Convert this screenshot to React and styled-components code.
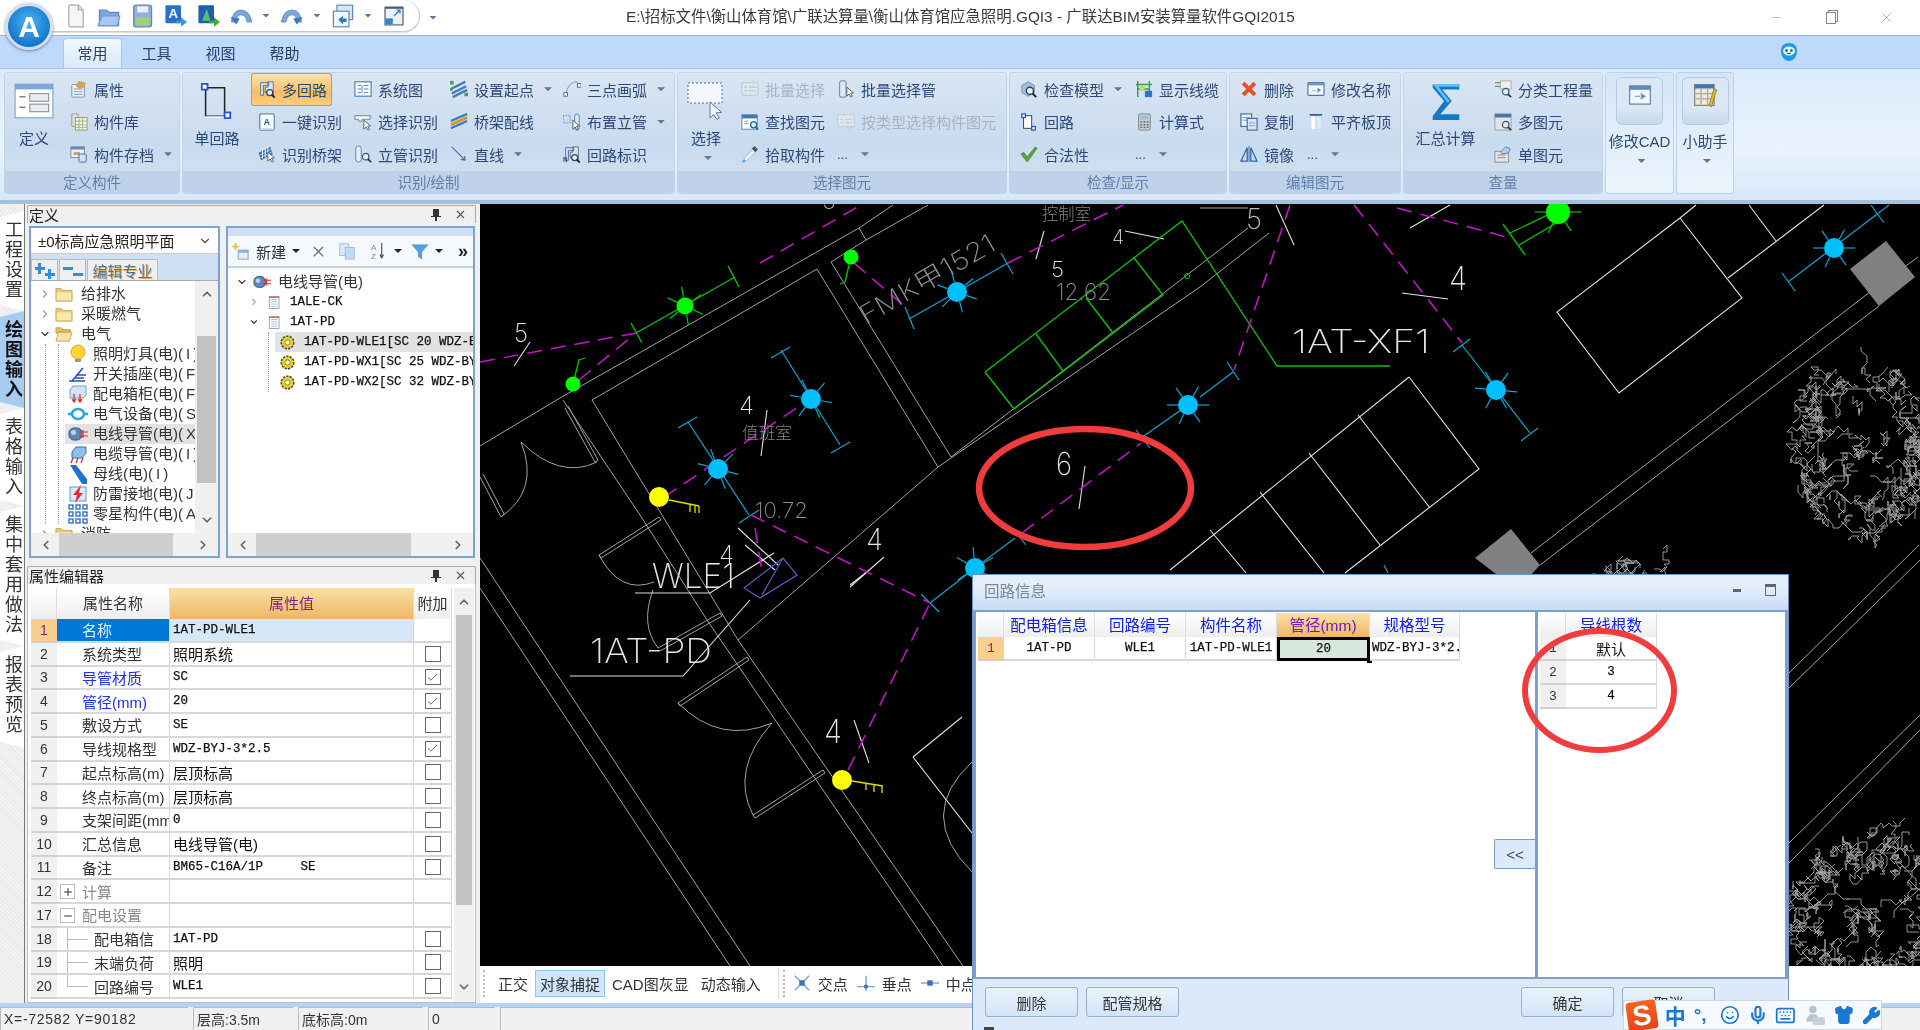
import React from 'react';
import styled, { createGlobalStyle } from 'styled-components';
import { ChevronRight, ChevronDown, ChevronUp, ChevronLeft, X, Minus, Plus, Smile, Mic, Keyboard, Shirt, Wrench, Check } from 'lucide-react';

const SANS = '"Liberation Sans","Noto Sans CJK SC",sans-serif';
const MONO = '"Liberation Mono","Noto Sans CJK SC",monospace';
const CAD = '"Inter","Liberation Sans","Noto Sans CJK SC",sans-serif';

const GlobalStyle = createGlobalStyle`
  html, body { margin: 0; padding: 0; background: #f0f0f0; }
  * { box-sizing: border-box; }
`;

/* ---------- icons ---------- */
const page = (
  <>
    <rect x="3" y="2" width="13" height="16" fill="#fff" stroke="#6f8fb5" />
    <path d="M5 6h9M5 9h9M5 12h9M5 15h9" stroke="#9db2cc" />
  </>
);
const lens = (
  <>
    <circle cx="13" cy="13" r="3.6" fill="#dff0ff" stroke="#44566e" strokeWidth="1.4" />
    <path d="M15.6 15.6L19 19" stroke="#333" strokeWidth="2" />
  </>
);
const pointer = <path d="M11 8l0 10 2.5-2.4 2 3.4 1.6-1-2-3.3 3.2-.4z" fill="#fff" stroke="#555" />;
const loopShape = (
  <>
    <path d="M3 3h9v3H6v11H3z M8 8h3V2h6v15h-6v-3H8z" fill="#dbe6f3" stroke="#4c6a92" />
  </>
);

const icons = {
  attr: (<><rect x="2" y="5" width="14" height="14" rx="1" fill="#eef3f9" stroke="#6f8fb5" /><path d="M4 10h10M4 13h10M4 16h10" stroke="#7a8ca5" /><path d="M6 6l4-5 8 2-3 6-5 1z" fill="#d9a05a" /></>),
  lib: (<><rect x="2" y="1" width="7" height="14" fill="#ddd" stroke="#999" /><rect x="6" y="5" width="13" height="14" fill="#f5f2d8" stroke="#8a9a7a" /><path d="M6 9h13M6 13h13M6 16h13M10 5v14M14 5v14" stroke="#9fb18f" /></>),
  store: (<><rect x="1" y="2" width="15" height="12" fill="#eee" stroke="#888" /><rect x="1" y="2" width="15" height="3" fill="#5c8bc4" /><rect x="4" y="8" width="7" height="3" fill="#c0a070" /><rect x="10" y="10" width="8" height="9" rx="1" fill="#cfe4fa" stroke="#2d6fb5" /></>),
  multi: (<>{loopShape}<circle cx="13" cy="14" r="3.4" fill="#e8f3fc" stroke="#33475f" strokeWidth="1.4" /><path d="M15.4 16.4L18.6 19.6" stroke="#222" strokeWidth="2" /></>),
  oneKey: (<><rect x="2" y="1" width="16" height="18" rx="1.5" fill="#fff" stroke="#5a86b8" strokeWidth="1.4" /><rect x="2" y="17" width="16" height="2" fill="#bcd2ea" /><text x="6" y="13" fontSize="10" fontWeight="700" fontFamily={SANS} fill="#2a5788">A</text></>),
  bridgeId: (<><g stroke="#3276b5" strokeWidth="2.4"><path d="M1 10L14 3M2 13l13-7M3 16l13-7" /></g><g stroke="#fff"><path d="M5 4v11M8 3v11M11 2v11" /></g>{pointer}</>),
  sys: (<><rect x="1" y="2" width="18" height="16" fill="#fff" stroke="#5a86b8" strokeWidth="1.4" /><path d="M4 6h4M4 10h4M4 14h4M11 6h5M11 10h5M11 14h5M9 6v8" stroke="#3a79ba" /></>),
  selId: (<><path d="M1 3h17v4H9v2H5V7H1z" fill="#f4f7fb" stroke="#5a7da6" />{pointer}</>),
  riserId: (<><rect x="2" y="1" width="6" height="18" rx="3" fill="#e6eef8" stroke="#5a7da6" />{lens}</>),
  setStart: (<><g stroke="#3f7bbd" strokeWidth="2.6"><path d="M1 10L17 2M2 15L18 7M3 19l16-8" /></g><g fill="#4f9b55"><rect x="0" y="1" width="4" height="4" /><rect x="16" y="14" width="4" height="4" /><rect x="0" y="9" width="3" height="3" /></g></>),
  bridgeWire: (<><g stroke="#2d7cc0" strokeWidth="2.4"><path d="M1 9L19 1M1 17l18-8" /></g><path d="M1 13L19 5" stroke="#ea8a1f" strokeWidth="3" /></>),
  line: <path d="M2 2L17 17M17 17l-1-5M17 17l-5-1" stroke="#3c6ea5" strokeWidth="1.2" fill="none" />,
  arc: (<><path d="M3 16Q5 6 11 3T18 6" stroke="#8a8a8a" fill="none" /><g fill="#fff" stroke="#2d6fb5"><rect x="1" y="14" width="4" height="4" /><rect x="16" y="4" width="4" height="4" /></g></>),
  riser: (<><rect x="0" y="3" width="8" height="8" fill="none" stroke="#4c78a8" strokeDasharray="1.5 1.5" /><rect x="13" y="1" width="5" height="18" rx="2.5" fill="#dfe9f5" stroke="#5a7da6" />{pointer}</>),
  loopTag: (<>{loopShape}<text x="0" y="19" fontSize="7" fontWeight="700" fontFamily={SANS} fill="#1e4f86">N</text><circle cx="13" cy="14" r="3.4" fill="#e8f3fc" stroke="#33475f" strokeWidth="1.4" /><path d="M15.4 16.4L18.6 19.6" stroke="#222" strokeWidth="2" /></>),
  batch: (<><rect x="1" y="3" width="18" height="14" rx="1" fill="#dfe6ee" stroke="#b8c2ce" /><path d="M4 8h3M4 12h3M9 8h8M9 12h8" stroke="#aab5c2" /></>),
  batchPipe: (<><rect x="3" y="1" width="7" height="18" rx="1.5" fill="#dfe9f5" stroke="#4c78a8" />{pointer}</>),
  find: (<><rect x="1" y="2" width="17" height="16" fill="#fff" stroke="#5a7da6" /><rect x="1" y="2" width="17" height="4" fill="#3f78b5" /><path d="M4 9h4M4 12h4" stroke="#888" /><circle cx="14" cy="13" r="3.4" fill="#d8ecff" stroke="#1768b3" strokeWidth="1.4" /><path d="M16 15.5l3 3" stroke="#1768b3" strokeWidth="2" /></>),
  byType: (<><rect x="1" y="2" width="18" height="13" fill="#e2e7ed" stroke="#c0c8d2" /><path d="M4 7h3M4 11h3M9 7h8M9 11h8" stroke="#b7c0cb" /><path d="M11 16h2M15 16h2M13 18h2" stroke="#c0c8d2" strokeWidth="1.5" /></>),
  pick: (<><path d="M3 18l1-4 9-9 3 3-9 9z" fill="#e8f1fa" stroke="#9db4cc" /><path d="M12 4l3-3 4 4-3 3z" fill="#555" /><circle cx="3" cy="18" r="1.5" fill="#4aa8e8" /></>),
  check: (<><path d="M2 6l7-4 7 4v8l-7 4-7-4z" fill="#9cc0de" stroke="#6d93b6" /><circle cx="11" cy="12" r="4" fill="#eef6fc" stroke="#2e3e50" strokeWidth="1.5" /><path d="M14 15l4 4" stroke="#222" strokeWidth="2.2" /></>),
  loop: (<><rect x="4" y="3" width="9" height="14" fill="#fff" stroke="#333" /><g fill="#fff" stroke="#1459d0" strokeWidth="1.4"><rect x="2" y="1" width="4" height="4" /><rect x="13" y="15" width="4" height="4" /></g></>),
  legal: <path d="M1 10l3-2 4 5L17 2l2 2L8 19z" fill="#5aa33a" stroke="#3d7d26" strokeWidth=".6" />,
  showWire: (<><path d="M3 1v18M16 1v18M1 5h18M3 10h13" stroke="#3c9a4b" strokeWidth="1.6" fill="none" /><rect x="5" y="6" width="6" height="6" fill="#b9d98a" /><rect x="11" y="12" width="8" height="7" fill="#2c78c4" /></>),
  calc: (<><rect x="4" y="1" width="13" height="18" rx="1.5" fill="#c9ccd0" stroke="#7d8288" /><rect x="6" y="3" width="9" height="4" fill="#8ec0e8" /><path d="M6 10h2M9.5 10h2M13 10h2M6 13h2M9.5 13h2M13 13h2M6 16h2M9.5 16h2M13 16h2" stroke="#666" strokeWidth="1.5" /></>),
  del: <path d="M2 5l3-3 5 5 5-5 3 3-5 5 5 5-3 3-5-5-5 5-3-3 5-5z" fill="#ee4b26" />,
  copy: (<><rect x="1" y="1" width="12" height="14" fill="#e8f1fb" stroke="#3d6fa5" strokeWidth="1.3" /><path d="M3 5h8M3 8h8" stroke="#7d9fc5" /><rect x="8" y="6" width="11" height="13" fill="#d7e7f8" stroke="#3d6fa5" strokeWidth="1.3" /><path d="M10 11h7M10 14h7" stroke="#7d9fc5" /></>),
  mirror: (<><path d="M8 3L1 18h7z" fill="none" stroke="#2f62a8" strokeWidth="1.4" /><path d="M12 3l7 15h-7z" fill="none" stroke="#2f62a8" strokeWidth="1.4" /><path d="M10 1v18" stroke="#2f62a8" /></>),
  rename: (<><rect x="1" y="3" width="18" height="14" rx="1" fill="#f3f7fc" stroke="#4c78a8" strokeWidth="1.3" /><rect x="1" y="3" width="18" height="3" fill="#6b97c9" /><path d="M6 12h4M12 9l3 2-3 3z" fill="#2c78c4" stroke="#8aa9cb" /></>),
  align: (<><path d="M3 2h14" stroke="#3a5f8c" strokeWidth="2" /><rect x="5" y="4" width="4" height="14" fill="#fff" /><rect x="11" y="4" width="4" height="14" fill="#d9ecfb" /></>),
  classify: (<><rect x="7" y="1" width="12" height="9" fill="#eee" stroke="#aaa" /><path d="M1 3h6M1 7h6" stroke="#666" />{lens}</>),
  multiEl: (<><rect x="1" y="1" width="18" height="18" fill="#e5e5e5" stroke="#999" /><rect x="1" y="1" width="18" height="4" fill="#3f78b5" />{lens}</>),
  singleEl: (<><rect x="1" y="7" width="15" height="12" fill="#e5e5e5" stroke="#888" /><path d="M4 11h9M4 14h9" stroke="#888" /><path d="M7 8l6-6 5 2-2 5-7 1z" fill="#b9cde2" stroke="#5f7fa8" /></>),
  define: (<><rect x="1" y="2" width="18" height="16" fill="#fff" stroke="#7a9cc6" strokeWidth=".5" /><rect x="1" y="2" width="18" height="2.5" fill="#7fa7d8" /><path d="M3 8h3M3 13h3" stroke="#888" strokeWidth=".7" /><rect x="8" y="6.5" width="9" height="3.6" fill="#e8eef5" stroke="#8a8a8a" strokeWidth=".5" /><rect x="8" y="11.5" width="9" height="3.6" fill="#e8eef5" stroke="#8a8a8a" strokeWidth=".5" /></>),
  single: (<><path d="M4 3h10v15H4z" fill="none" stroke="#222" strokeWidth=".8" /><path d="M3.5 18.4h11" stroke="#fff" strokeWidth=".8" /><g fill="#fff" stroke="#1c4fe0" strokeWidth=".9"><rect x="2" y="1" width="3" height="3" /><rect x="14" y="16" width="3" height="3" /></g></>),
  select: (<><rect x="1" y="1" width="17" height="10" fill="#f3f7fd" stroke="#496f9f" strokeWidth=".5" strokeDasharray="1 1" /><path d="M12 10.5v8l1.8-1.8 1.6 2.5 1.2-.7-1.5-2.6 2.7-.2z" fill="#f4f7fc" stroke="#5c7ba3" strokeWidth=".5" /></>),
  sigma: (<><path d="M3 1h14v3H8l5 6-6 7h10v3H3v-2l6-8-6-7z" fill="#1678c4" /><path d="M3 1h14v1.5H6l6 7.5-1 1z" fill="#5fc0f0" /></>),
  cad: (<><rect x="2" y="3" width="16" height="14" fill="#f3f7fc" stroke="#6b8db8" /><rect x="2" y="3" width="16" height="3" fill="#5c8bc4" /><path d="M6 11h4M11 9l3 2-3 2z" fill="#2c78c4" stroke="#8aa9cb" /></>),
  helper: (<><rect x="2" y="2" width="15" height="16" fill="#efe9d8" stroke="#888" /><rect x="2" y="2" width="15" height="3" fill="#3f78b5" /><path d="M2 9h15M2 13h15M7 5v13M12 5v13" stroke="#aaa" /><path d="M13 18l4-13 2 1-4 13z" fill="#e5b92c" stroke="#7d6410" strokeWidth=".5" /></>),
  newDoc: (<><path d="M5 1h7l4 4v14H5a1 1 0 0 1-1-1V2a1 1 0 0 1 1-1z" fill="#f6f6f6" stroke="#a8a8a8" /><path d="M12 1v4h4" fill="#ddd" stroke="#a8a8a8" /></>),
  open: (<><path d="M2 5h6l2 2h8v11H2z" fill="#7ea7e0" stroke="#5b85bf" /><path d="M1 18l3-8h15l-2 8z" fill="#a8c6ef" stroke="#6b95ce" /></>),
  save: (<><rect x="3" y="1" width="15" height="18" rx="2" fill="#8fb2de" stroke="#5f87ba" /><rect x="6" y="2" width="9" height="5" fill="#eef3f9" /><rect x="5" y="11" width="11" height="7" fill="#9ed07c" /></>),
  saveA: (<><rect x="2" y="1" width="13" height="15" rx="1" fill="#2a70c8" /><text x="4.5" y="12" fontSize="11" fontWeight="700" fontFamily={SANS} fill="#fff">A</text><path d="M11 14h4v-3l5 4-5 4v-3h-4z" fill="#3a9ae0" /></>),
  saveDl: (<><rect x="2" y="1" width="13" height="15" rx="1" fill="#1f5fb0" /><path d="M5 14L9 4l3 10z" fill="#58c06a" /><path d="M11 14h4v-3l5 4-5 4v-3h-4z" fill="#4aa83a" /></>),
  undo: (<><path d="M2 15Q3 5 10 5t9 10h-4Q14 9 10 9t-4 6z" fill="#7aa6d8" stroke="#4f7fb8" strokeWidth=".6" /><path d="M1 11l8 1-3 5z" fill="#3a78c0" /></>),
  redo: (<><path d="M18 15Q17 5 10 5T1 15h4q1-6 5-6t4 6z" fill="#7aa6d8" stroke="#4f7fb8" strokeWidth=".6" /><path d="M19 11l-8 1 3 5z" fill="#3a78c0" /></>),
  win: (<><rect x="5" y="1" width="13" height="12" fill="#d8e6f7" stroke="#5f87ba" /><rect x="2" y="6" width="13" height="13" fill="#f2f6fb" stroke="#5f87ba" /><path d="M6 13l4-3v2h3v3h-3v2z" fill="#2c78c4" /></>),
  resize: (<><rect x="2" y="2" width="16" height="16" rx="1" fill="#4f5d6c" /><rect x="3" y="4" width="14" height="13" fill="#eaf1f8" /><rect x="3" y="12" width="6" height="5" fill="#2c88d0" /><path d="M10 10l5-5M12 5h3v3" stroke="#2c78c4" fill="none" /></>),
  folder: (<><path d="M1 4h6l2 2h10v12H1z" fill="#f0c869" stroke="#a88a44" strokeWidth=".7" /><rect x="2" y="8" width="16" height="9" fill="#f9e9a9" /></>),
  folderOpen: (<><path d="M1 3h6l2 2h8v4H1z" fill="#e5bd5f" stroke="#a88a44" strokeWidth=".7" /><path d="M1 18l3-10h15l-3 10z" fill="#f9e3a0" stroke="#a88a44" strokeWidth=".7" /></>),
  bulb: (<><circle cx="10" cy="8" r="7" fill="#ffd535" stroke="#e8a820" /><rect x="7" y="15" width="6" height="3" fill="#999" /></>),
  socket: <path d="M1 17h16M4 17L15 4M8 11h10M6 14h10" stroke="#2a52c0" strokeWidth="1.6" fill="none" />,
  box: (<><path d="M2 6l3-4h13v9l-3 3H2z" fill="#cfe4fa" stroke="#7b9cc6" /><path d="M6 10v7M12 10v7M4 15l2 3 2-3M10 15l2 3 2-3" stroke="#e02a2a" strokeWidth="1.3" fill="none" /></>),
  device: (<><ellipse cx="10" cy="10" rx="6" ry="5" fill="none" stroke="#25a7dd" strokeWidth="2.4" /><path d="M0 10h5M15 10h5" stroke="#25a7dd" strokeWidth="2.4" /></>),
  conduit: (<><rect x="1" y="4" width="13" height="12" rx="5" fill="#5f86b5" stroke="#36597f" /><rect x="3" y="6" width="5" height="5" rx="2" fill="#b7d2ec" /><path d="M11 8h9M11 12h9M15 6v8" stroke="#e53030" strokeWidth="1.2" /></>),
  cable: (<><path d="M4 8l4-5h10v6l-4 5H4z" fill="#8ec0ee" stroke="#3a6ea8" /><path d="M3 19l2-5M8 19l2-5M13 19l2-5" stroke="#e02a2a" strokeWidth="1.3" /></>),
  bus: <path d="M2 1h6l11 14v5h-5z" fill="#1f73cf" />,
  ground: (<><rect x="2" y="3" width="16" height="14" fill="#d8eafa" stroke="#6d95c4" /><path d="M13 1L5 11h4l-2 8 8-10h-4z" fill="#ea2a2a" /></>),
  misc: (<><g fill="#fff" stroke="#2068c8" strokeWidth="1.3"><rect x="1" y="1" width="4" height="4" /><rect x="8" y="1" width="4" height="4" /><rect x="15" y="1" width="4" height="4" /><rect x="1" y="8" width="4" height="4" /><rect x="8" y="8" width="4" height="4" /><rect x="15" y="8" width="4" height="4" /><rect x="1" y="15" width="4" height="4" /><rect x="8" y="15" width="4" height="4" /><rect x="15" y="15" width="4" height="4" /></g></>),
  docTree: (<>{page}<rect x="3" y="2" width="13" height="2" fill="#e6723a" /></>),
  gear: (<><circle cx="10" cy="10" r="8.4" fill="#e8d410" stroke="#444" strokeWidth="2" strokeDasharray="3 1.6" /><circle cx="10" cy="10" r="3.4" fill="#fff" stroke="#665" /></>),
  newItem: (<><path d="M5 0l1.5 3.5L10 5 6.5 6.5 5 10 3.5 6.5 0 5l3.5-1.5z" fill="#ecc640" /><rect x="8" y="9" width="11" height="10" fill="#e7f0fa" stroke="#7a9cc6" /><rect x="8" y="9" width="11" height="3" fill="#8fb2de" /></>),
  copyGrey: (<><rect x="2" y="2" width="10" height="13" fill="#dce9f8" stroke="#9bbbe0" /><rect x="8" y="6" width="10" height="13" fill="#c3daf3" stroke="#9bbbe0" /></>),
  sort: (<><text x="1" y="9" fontSize="9" fontFamily={SANS} fill="#6a8fc8">A</text><text x="1" y="19" fontSize="9" fontFamily={SANS} fill="#d46a6a">Z</text><path d="M13 1v17M13 18l-2-4M13 18l2-4" stroke="#555" strokeWidth="1.3" fill="none" /></>),
  filter: <path d="M1 3h18l-7 8v8l-4-3v-5z" fill="#4fa3dc" stroke="#3a86ba" strokeWidth=".5" />,
  mascot: (<><path d="M10 1c5 0 8 3 8 8 0 6-4 10-8 10s-8-4-8-10c0-5 3-8 8-8z" fill="#1d9be0" /><ellipse cx="10" cy="9" rx="6" ry="4.5" fill="#dff3ff" /><circle cx="7.5" cy="8.5" r="1.2" fill="#0a4c80" /><circle cx="12.5" cy="8.5" r="1.2" fill="#0a4c80" /><path d="M8 11q2 1.5 4 0" stroke="#0a4c80" fill="none" /></>),
  cross: (<><path d="M2 2l16 16M18 2L2 18" stroke="#7fa5d8" strokeWidth="1.6" /><rect x="7" y="7" width="6" height="6" fill="#3d6fb5" /></>),
  foot: (<><path d="M0 14h20M10 2v17" stroke="#7fa5d8" strokeWidth="1.6" /><rect x="8" y="12" width="4" height="4" fill="#3d6fb5" /></>),
  mid: (<><path d="M0 10h20" stroke="#7fa5d8" strokeWidth="1.6" /><rect x="7" y="7" width="6" height="6" fill="#3d6fb5" /></>),
};

const Ic = ({ n, s = 18 }) => (
  <svg width={s} height={s} viewBox="0 0 20 20" style={{ flex: 'none', display: 'block' }}>
    {icons[n]}
  </svg>
);

/* ---------- cad drawing ---------- */
const pts = (a) => a.map((p) => p.join(',')).join(' ');

const walls = [
  [[480, 446], [560, 398], [859, 228], [893, 205]],
  [[592, 400], [817, 269]],
  [[817, 269], [938, 467], [738, 640]],
  [[592, 400], [665, 520], [738, 640], [963, 966]],
  [[563, 400], [640, 515], [707, 620], [943, 966]],
  [[831, 262], [951, 457], [1200, 265], [1248, 228]],
  [[938, 467], [1200, 287], [1269, 233]],
  [[831, 262], [866, 240], [928, 205]],
  [[859, 228], [866, 240]],
  [[480, 558], [750, 966]],
  [[480, 588], [730, 966]],
  [[1918, 257], [1866, 295], [1531, 553]],
  [[1879, 306], [1540, 565]],
  [[1919, 545], [1789, 673]],
  [[1920, 560], [1789, 688]],
  [[1920, 715], [1789, 843]],
  [[1920, 730], [1789, 863]],
  [[480, 477], [501, 517], [504, 514], [483, 474]],
  [[565, 408], [595, 462], [598, 460], [568, 406]],
  [[599, 555], [659, 517], [661, 520], [601, 558], [599, 555]],
  [[678, 703], [747, 657], [749, 660], [680, 706], [678, 703]],
  [[753, 815], [823, 770], [825, 773], [755, 818], [753, 815]],
  [[658, 648], [720, 613], [722, 616], [660, 651]],
  [[1248, 208], [1200, 208]],
];
const arcs = [
  'M521 442Q540 490 501 517',
  'M521 442Q560 480 597 462',
  'M599 555Q620 595 654 582',
  'M653 590Q640 625 658 648',
  'M678 703Q720 745 772 723',
  'M772 723Q730 770 753 815',
  'M972 762Q915 815 972 872',
];
const whites = [
  [[1680, 218], [1557, 312], [1619, 393], [1742, 298], [1680, 218]],
  [[1680, 218], [1696, 205]],
  [[1728, 278], [1824, 205]],
  [[1749, 205], [1776, 241]],
  [[1409, 377], [1479, 469], [1345, 573]],
  [[1409, 377], [1170, 570]],
  [[1358, 415], [1430, 508]],
  [[1309, 453], [1380, 545]],
  [[1260, 492], [1324, 573]],
  [[1210, 530], [1246, 573]],
  [[530, 342], [514, 366]],
  [[767, 410], [761, 456]],
  [[1085, 466], [1079, 509]],
  [[884, 557], [850, 587]],
  [[1044, 231], [1036, 259]],
  [[1125, 231], [1164, 239]],
  [[1402, 293], [1448, 299]],
  [[1276, 205], [1294, 245]],
  [[1450, 205], [1410, 228]],
  [[854, 720], [869, 763]],
  [[570, 676], [683, 676], [750, 600]],
  [[635, 593], [710, 593], [774, 553]],
  [[913, 757], [962, 717]],
  [[913, 757], [972, 833]],
  [[738, 528], [778, 565]],
  [[745, 545], [775, 570]],
  [[850, 585], [868, 571]],
];
const magentas = [
  [[480, 362], [636, 333]],
  [[579, 380], [636, 333]],
  [[760, 263], [861, 205]],
  [[854, 263], [909, 310]],
  [[1008, 263], [1123, 205]],
  [[664, 497], [801, 405]],
  [[751, 515], [930, 603]],
  [[1022, 533], [1141, 443]],
  [[755, 528], [762, 572]],
  [[848, 770], [930, 603]],
  [[1397, 208], [1514, 239]],
  [[1354, 205], [1462, 343]],
  [[1290, 205], [1234, 370]],
];
const greens = [
  [[985, 372], [1182, 221], [1277, 366], [1390, 366]],
  [[985, 372], [1014, 409], [1163, 295]],
  [[1036, 334], [1063, 371]],
  [[1086, 298], [1113, 333]],
  [[1134, 258], [1163, 295]],
  [[636, 333], [735, 277]],
  [[631, 323], [642, 343]],
  [[728, 266], [739, 287]],
  [[573, 384], [579, 360], [585, 358]],
  [[851, 257], [845, 282], [840, 284]],
  [[1558, 210], [1510, 233]],
  [[1558, 222], [1519, 245]],
  [[1503, 224], [1525, 255]],
];
const cyans = [
  [[909, 319], [1008, 263]],
  [[905, 307], [914, 329]],
  [[1001, 253], [1013, 274]],
  [[781, 350], [840, 445]],
  [[771, 358], [790, 347]],
  [[831, 453], [850, 442]],
  [[688, 422], [749, 515]],
  [[678, 428], [697, 417]],
  [[739, 523], [759, 510]],
  [[1141, 438], [1188, 405]],
  [[975, 568], [1015, 538]],
  [[1014, 530], [1026, 545]],
  [[1136, 430], [1150, 448]],
  [[930, 603], [975, 568]],
  [[921, 594], [939, 612]],
  [[1462, 345], [1530, 433]],
  [[1453, 352], [1470, 339]],
  [[1521, 441], [1538, 428]],
  [[1788, 282], [1889, 205]],
  [[1782, 273], [1795, 291]],
  [[1871, 205], [1884, 223]],
  [[1200, 397], [1233, 372]],
  [[1227, 362], [1239, 380]],
  [[1384, 565], [1388, 573]],
];
const fixtures = [
  { x: 957, y: 292, r: 10, c: '#00bfff', l: '#0aa6cf', a: 20 },
  { x: 811, y: 399, r: 10, c: '#00bfff', l: '#0aa6cf', a: 10 },
  { x: 718, y: 469, r: 10, c: '#00bfff', l: '#0aa6cf', a: 15 },
  { x: 1188, y: 405, r: 10, c: '#00bfff', l: '#0aa6cf', a: 0 },
  { x: 975, y: 568, r: 10, c: '#00bfff', l: '#0aa6cf', a: 30 },
  { x: 1496, y: 390, r: 10, c: '#00bfff', l: '#0aa6cf', a: 5 },
  { x: 1834, y: 248, r: 10, c: '#00bfff', l: '#0aa6cf', a: 0 },
  { x: 685, y: 306, r: 8.5, c: '#00ff00', l: '#00c800', a: 25 },
  { x: 1558, y: 212, r: 12, c: '#00ff00', l: '#00c800', a: 0 },
];
const dots = [
  { x: 851, y: 257, r: 7.5, c: '#00ff00' },
  { x: 573, y: 384, r: 7.5, c: '#00ff00' },
  { x: 659, y: 497, r: 10, c: '#ffff00' },
  { x: 842, y: 780, r: 10, c: '#ffff00' },
];
const keys = [
  'M669 500L699 506M690 505v7M695 506v7M699 506v7',
  'M852 781L883 786M866 783v7M874 785v7M882 786v7',
];
const labels = [
  { t: '5', x: 514, y: 342, s: 25, c: '#e4e4e4', w: 14 },
  { t: '4', x: 739, y: 414, s: 24, c: '#e4e4e4', w: 15 },
  { t: '4', x: 719, y: 563, s: 24, c: '#e4e4e4', w: 15 },
  { t: '6', x: 1056, y: 475, s: 32, c: '#e4e4e4', w: 16 },
  { t: '4', x: 866, y: 550, s: 30, c: '#e4e4e4', w: 17 },
  { t: '5', x: 1051, y: 277, s: 22, c: '#e4e4e4', w: 13 },
  { t: '4', x: 1112, y: 244, s: 20, c: '#e4e4e4', w: 12 },
  { t: '5', x: 822, y: 209, s: 24, c: '#aaa', w: 14 },
  { t: '5', x: 1246, y: 229, s: 29, c: '#bbb', w: 16 },
  { t: '4', x: 1449, y: 290, s: 33, c: '#e4e4e4', w: 18 },
  { t: '4', x: 824, y: 743, s: 33, c: '#e4e4e4', w: 18 },
  { t: '1AT-XF1', x: 1292, y: 353, s: 32, c: '#e4e4e4', w: 138 },
  { t: '1AT-PD', x: 590, y: 663, s: 34, c: '#e4e4e4', w: 122 },
  { t: 'WLE1', x: 652, y: 588, s: 34, c: '#e4e4e4', w: 83 },
  { t: '10.72', x: 755, y: 518, s: 22, c: '#8f8f8f', w: 53 },
  { t: '12.62', x: 1056, y: 300, s: 23, c: '#8f8f8f', w: 55 },
  { t: '值班室', x: 742, y: 439, s: 17, c: '#858585', w: 50 },
  { t: '控制室', x: 1042, y: 220, s: 17, c: '#858585', w: 49 },
];

function makeTree(cx, cy, rx, ry, n, seed) {
  let v = seed;
  const rnd = () => {
    v = (v * 16807) % 2147483647;
    return v / 2147483647;
  };
  const out = [];
  for (let i = 0; i < n; i += 1) {
    const t = rnd() * Math.PI * 2;
    const k = rnd() < 0.05 ? rnd() * 0.3 : 0.62 + rnd() * 0.38;
    let x = cx + Math.cos(t) * rx * k;
    let y = cy + Math.sin(t) * ry * k;
    const p = [[Math.round(x), Math.round(y)]];
    for (let j = 0; j < 11; j += 1) {
      // short kinked steps, turning in 45 degree jumps like the hatch of a shrub
      const a = (Math.round(rnd() * 8) * Math.PI) / 4;
      const d = 3 + rnd() * 5;
      x += Math.cos(a) * d;
      y += Math.sin(a) * d;
      p.push([Math.round(x), Math.round(y)]);
    }
    out.push(pts(p));
  }
  return out;
}
const treeBlobs = [
  ...makeTree(1865, 448, 74, 84, 120, 4711),
  ...makeTree(1865, 915, 74, 84, 120, 977),
  ...makeTree(1635, 612, 44, 50, 40, 333),
];

function Fixture({ f }) {
  const rays = [0, 55, 115, 180, 235, 300].map((d) => {
    const a = ((d + f.a) * Math.PI) / 180;
    return (
      <line
        key={d}
        x1={f.x + Math.cos(a) * f.r}
        y1={f.y + Math.sin(a) * f.r}
        x2={f.x + Math.cos(a) * (f.r + 11)}
        y2={f.y + Math.sin(a) * (f.r + 11)}
        stroke={f.l}
        strokeWidth="1.2"
      />
    );
  });
  return (
    <g>
      {rays}
      <circle cx={f.x} cy={f.y} r={f.r} fill={f.c} />
    </g>
  );
}

function CadDrawing() {
  const lineSet = (arr, stroke, width, dash) =>
    arr.map((a, i) => <polyline key={i} points={pts(a)} fill="none" stroke={stroke} strokeWidth={width} strokeDasharray={dash} />);
  return (
    <CadSvg viewBox="480 204 1440 762">
      {treeBlobs.map((p, i) => <polyline key={i} points={p} fill="none" stroke="#a4a4a4" strokeWidth=".9" />)}
      {lineSet(walls, '#a2a2a2', 1)}
      {arcs.map((d) => <path key={d} d={d} fill="none" stroke="#a2a2a2" />)}
      {lineSet(whites, '#e2e2e2', 1.1)}
      <polygon points="1886,241 1915,277 1879,306 1850,269" fill="#808080" />
      <polygon points="1511,529 1540,565 1517,590 1475,558" fill="#808080" />
      <path d="M744 588L783 558L797 575L760 598ZM762 595L783 558" fill="none" stroke="#5a5ac8" strokeWidth="1.2" />
      {lineSet(greens, '#00c800', 1.3)}
      <circle cx="1187" cy="276" r="2.5" fill="none" stroke="#00c800" />
      {lineSet(cyans, '#0aa6cf', 1.2)}
      {lineSet(magentas, '#d010d0', 1.5, '15 9')}
      {fixtures.map((f, i) => <Fixture key={i} f={f} />)}
      {dots.map((d, i) => <circle key={i} cx={d.x} cy={d.y} r={d.r} fill={d.c} />)}
      {keys.map((d) => <path key={d} d={d} fill="none" stroke="#e0e000" strokeWidth="1.3" />)}
      {labels.map((l) => (
        <text key={l.t + l.x} x={l.x} y={l.y} fontSize={l.s} fontWeight="200" fill={l.c} fontFamily={CAD} textLength={l.w} lengthAdjust="spacingAndGlyphs">
          {l.t}
        </text>
      ))}
      <text x="866" y="325" fontSize="26" fontWeight="200" fill="#8f8f8f" fontFamily={CAD} textLength="152" lengthAdjust="spacingAndGlyphs" transform="rotate(-30 866 325)">FMK甲1521</text>
      <ellipse cx="1085" cy="488" rx="106" ry="59" fill="none" stroke="#f03c3c" strokeWidth="6.5" />
    </CadSvg>
  );
}

/* ---------- ribbon data ---------- */
const Tool = ({ i, t, active, arrow, off }) => (
  <ToolRow $active={active} $off={off}>
    {i ? <Ic n={i} /> : <Dots>...</Dots>}
    {t && <span>{t}</span>}
    {arrow && <Caret />}
  </ToolRow>
);

const ToolColumn = ({ w, items }) => (
  <ToolCol $w={w}>
    {items.map((it, idx) => <Tool key={idx} {...it} />)}
  </ToolCol>
);

const Large = ({ w, icon, size, label, arrow }) => (
  <LargeBtn $w={w}>
    <LargeSlot><Ic n={icon} s={size} /></LargeSlot>
    <LargeText>{label}</LargeText>
    {arrow && <Caret />}
  </LargeBtn>
);

const Collapsed = ({ w, icon, label }) => (
  <CollapsedGroup $w={w}>
    <CollapsedBox><Ic n={icon} s={26} /></CollapsedBox>
    <LargeText>{label}</LargeText>
    <Caret />
  </CollapsedGroup>
);

/* ---------- panels data ---------- */
const leftTree = [
  { i: 'bulb', t: '照明灯具(电)', c: '(I)' },
  { i: 'socket', t: '开关插座(电)', c: '(F)' },
  { i: 'box', t: '配电箱柜(电)', c: '(F)' },
  { i: 'device', t: '电气设备(电)', c: '(S)' },
  { i: 'conduit', t: '电线导管(电)', c: '(X)', sel: true },
  { i: 'cable', t: '电缆导管(电)', c: '(I)' },
  { i: 'bus', t: '母线(电)', c: '(I)' },
  { i: 'ground', t: '防雷接地(电)', c: '(J)' },
  { i: 'misc', t: '零星构件(电)', c: '(A)' },
];

const props = [
  { n: 1, name: '名称', val: '1AT-PD-WLE1', mono: true, sel: true, box: 'none' },
  { n: 2, name: '系统类型', val: '照明系统', box: 'off' },
  { n: 3, name: '导管材质', val: 'SC', mono: true, blue: true, box: 'on' },
  { n: 4, name: '管径(mm)', val: '20', mono: true, blue: true, box: 'on' },
  { n: 5, name: '敷设方式', val: 'SE', mono: true, box: 'off' },
  { n: 6, name: '导线规格型', val: 'WDZ-BYJ-3*2.5', mono: true, box: 'on' },
  { n: 7, name: '起点标高(m)', val: '层顶标高', box: 'off' },
  { n: 8, name: '终点标高(m)', val: '层顶标高', box: 'off' },
  { n: 9, name: '支架间距(mm', val: '0', mono: true, box: 'off' },
  { n: 10, name: '汇总信息', val: '电线导管(电)', box: 'off' },
  { n: 11, name: '备注', val: 'BM65-C16A/1P     SE', mono: true, box: 'off' },
  { n: 12, name: '计算', fold: 'plus', box: 'none' },
  { n: 17, name: '配电设置', fold: 'minus', box: 'none' },
  { n: 18, name: '配电箱信', val: '1AT-PD', mono: true, branch: true, box: 'off' },
  { n: 19, name: '末端负荷', val: '照明', branch: true, box: 'off' },
  { n: 20, name: '回路编号', val: 'WLE1', mono: true, branch: true, last: true, box: 'off' },
];

const sideTabs = [
  { t: '工程设置', h: 100 },
  { t: '绘图输入', h: 97, active: true },
  { t: '表格输入', h: 98 },
  { t: '集中套用做法', h: 140 },
  { t: '报表预览', h: 102 },
];

const PanelHead = ({ title }) => (
  <PanelHeader>
    <span>{title}</span>
    <PanelPin>
      <PinIcon viewBox="0 0 12 14"><path d="M3 1h6v7h2v1H7v4H5V9H1V8h2z" fill="#333" /></PinIcon>
      <X size={13} color="#555" />
    </PanelPin>
  </PanelHeader>
);

const HBar = ({ thumb }) => (
  <HScroll>
    <ChevronLeft size={14} strokeWidth={3} color="#666" />
    <HThumb $w={thumb} />
    <ChevronRight size={14} strokeWidth={3} color="#666" />
  </HScroll>
);

export default function App() {
  return (
    <Root>
      <GlobalStyle />
      <TitleBar>
        <Qat>
          {['newDoc', 'open', 'save', 'saveA', 'saveDl', 'undo'].map((n) => <Ic key={n} n={n} s={24} />)}
          <QatCaret />
          <Ic n="redo" s={24} />
          <QatCaret />
          <Ic n="win" s={24} />
          <QatCaret />
          <Ic n="resize" s={24} />
        </Qat>
        <QatMore>
          <QatCaret />
        </QatMore>
        <WindowTitle>E:\招标文件\衡山体育馆\广联达算量\衡山体育馆应急照明.GQI3 - 广联达BIM安装算量软件GQI2015</WindowTitle>
        <WinButtons>
          <Minus size={13} color="#888" strokeWidth={1} />
          <WinRestore />
          <X size={15} color="#888" strokeWidth={1} />
        </WinButtons>
      </TitleBar>
      <AppLogo>A</AppLogo>

      <TabRow>
        <RibbonTab $active>常用</RibbonTab>
        <RibbonTab>工具</RibbonTab>
        <RibbonTab>视图</RibbonTab>
        <RibbonTab>帮助</RibbonTab>
        <Mascot><Ic n="mascot" s={20} /></Mascot>
      </TabRow>

      <RibbonBody>
        <Group $w={174}>
          <GroupMain>
            <Large w={58} icon="define" size={42} label="定义" />
            <ToolColumn items={[{ i: 'attr', t: '属性' }, { i: 'lib', t: '构件库' }, { i: 'store', t: '构件存档', arrow: true }]} />
          </GroupMain>
          <GroupLabel>定义构件</GroupLabel>
        </Group>
        <Group $w={491}>
          <GroupMain>
            <Large w={68} icon="single" size={38} label="单回路" />
            <ToolColumn w={96} items={[{ i: 'multi', t: '多回路', active: true }, { i: 'oneKey', t: '一键识别' }, { i: 'bridgeId', t: '识别桥架' }]} />
            <ToolColumn w={96} items={[{ i: 'sys', t: '系统图' }, { i: 'selId', t: '选择识别' }, { i: 'riserId', t: '立管识别' }]} />
            <ToolColumn w={113} items={[{ i: 'setStart', t: '设置起点', arrow: true }, { i: 'bridgeWire', t: '桥架配线' }, { i: 'line', t: '直线', arrow: true }]} />
            <ToolColumn items={[{ i: 'arc', t: '三点画弧', arrow: true }, { i: 'riser', t: '布置立管', arrow: true }, { i: 'loopTag', t: '回路标识' }]} />
          </GroupMain>
          <GroupLabel>识别/绘制</GroupLabel>
        </Group>
        <Group $w={328}>
          <GroupMain>
            <Large w={56} icon="select" size={40} label="选择" arrow />
            <ToolColumn w={96} items={[{ i: 'batch', t: '批量选择', off: true }, { i: 'find', t: '查找图元' }, { i: 'pick', t: '拾取构件' }]} />
            <ToolColumn items={[{ i: 'batchPipe', t: '批量选择管' }, { i: 'byType', t: '按类型选择构件图元', off: true }, { arrow: true }]} />
          </GroupMain>
          <GroupLabel>选择图元</GroupLabel>
        </Group>
        <Group $w={216}>
          <GroupMain $pad={3}>
            <ToolColumn w={115} items={[{ i: 'check', t: '检查模型', arrow: true }, { i: 'loop', t: '回路' }, { i: 'legal', t: '合法性' }]} />
            <ToolColumn items={[{ i: 'showWire', t: '显示线缆' }, { i: 'calc', t: '计算式' }, { arrow: true }]} />
          </GroupMain>
          <GroupLabel>检查/显示</GroupLabel>
        </Group>
        <Group $w={170}>
          <GroupMain $pad={3}>
            <ToolColumn w={67} items={[{ i: 'del', t: '删除' }, { i: 'copy', t: '复制' }, { i: 'mirror', t: '镜像' }]} />
            <ToolColumn items={[{ i: 'rename', t: '修改名称' }, { i: 'align', t: '平齐板顶' }, { arrow: true }]} />
          </GroupMain>
          <GroupLabel>编辑图元</GroupLabel>
        </Group>
        <Group $w={198}>
          <GroupMain>
            <Large w={83} icon="sigma" size={38} label="汇总计算" />
            <ToolColumn items={[{ i: 'classify', t: '分类工程量' }, { i: 'multiEl', t: '多图元' }, { i: 'singleEl', t: '单图元' }]} />
          </GroupMain>
          <GroupLabel>查量</GroupLabel>
        </Group>
        <Collapsed w={67} icon="cad" label="修改CAD" />
        <Collapsed w={56} icon="helper" label="小助手" />
      </RibbonBody>

      <Workspace>
        <LeftColumn>
          <SideTabs>
            {sideTabs.map((s) => <SideTab key={s.t} $h={s.h} $active={s.active}>{s.t}</SideTab>)}
          </SideTabs>
          <Panels>
            <PanelHead title="定义" />
            <DefineBody>
              <SubPanel $w={191}>
                <Combo>
                  <span>±0标高应急照明平面</span>
                  <ChevronDown size={14} color="#555" />
                </Combo>
                <MiniBar>
                  <MiniBtn $w={27}><FoldPair $plus /></MiniBtn>
                  <MiniBtn $w={27}><FoldPair /></MiniBtn>
                  <MiniBtn $w={71}><EditText>编辑专业</EditText></MiniBtn>
                </MiniBar>
                <TreeArea>
                  <TreeScroll $top={3}>
                    <TreeRow $pad={8} $gap={4}><ChevronRight size={12} color="#999" strokeWidth={2.5} /><Ic n="folder" /><RowText $gapL={4}>给排水</RowText></TreeRow>
                    <TreeRow $pad={8} $gap={4}><ChevronRight size={12} color="#999" strokeWidth={2.5} /><Ic n="folder" /><RowText $gapL={4}>采暖燃气</RowText></TreeRow>
                    <TreeRow $pad={8} $gap={4}><ChevronDown size={12} color="#444" strokeWidth={2.5} /><Ic n="folderOpen" /><RowText $gapL={4}>电气</RowText></TreeRow>
                    <Guide $m={14}>
                      <Guide $m={12}>
                        {leftTree.map((r) => (
                          <TreeRow key={r.t} $m={6} $pad={3} $gap={5} $sel={r.sel}>
                            <Ic n={r.i} s={20} />
                            <RowText>{r.t}<TreeCode>{r.c}</TreeCode></RowText>
                          </TreeRow>
                        ))}
                      </Guide>
                    </Guide>
                    <TreeRow $pad={8} $gap={4}><ChevronRight size={12} color="#999" strokeWidth={2.5} /><Ic n="folder" /><RowText $gapL={4}>消防</RowText></TreeRow>
                  </TreeScroll>
                  <VScroll>
                    <ChevronUp size={14} strokeWidth={3} color="#666" />
                    <VThumb $top={5} $h={147} />
                    <ChevronDown size={14} strokeWidth={3} color="#666" />
                  </VScroll>
                </TreeArea>
                <HBar thumb={114} />
              </SubPanel>

              <SubPanel $w={249}>
                <BlueCap />
                <RightTools>
                  <Ic n="newItem" />
                  <NewText>新建</NewText>
                  <DarkCaret />
                  <ToolSpacer $w={2} />
                  <X size={17} color="#777" />
                  <ToolSpacer $w={3} />
                  <Ic n="copyGrey" />
                  <ToolSpacer $w={6} />
                  <Ic n="sort" />
                  <DarkCaret />
                  <ToolSpacer $w={1} />
                  <Ic n="filter" />
                  <DarkCaret />
                  <MoreMark>»</MoreMark>
                </RightTools>
                <TreeArea>
                  <TreeScroll $top={4}>
                    <TreeRow $pad={8} $gap={5}><ChevronDown size={12} color="#444" strokeWidth={2.5} /><Ic n="conduit" /><RowText $gapL={2}>电线导管(电)</RowText></TreeRow>
                    <TreeRow $pad={21} $gap={8}><ChevronRight size={10} color="#aaa" strokeWidth={3} /><Ic n="docTree" s={15} /><MonoText>1ALE-CK</MonoText></TreeRow>
                    <TreeRow $pad={21} $gap={8}><ChevronDown size={10} color="#444" strokeWidth={3} /><Ic n="docTree" s={15} /><MonoText>1AT-PD</MonoText></TreeRow>
                    <Guide $m={40}>
                      <TreeRow $m={6} $pad={5} $gap={9} $sel><Ic n="gear" s={15} /><MonoText>1AT-PD-WLE1[SC 20 WDZ-BYJ-3*2.5]</MonoText></TreeRow>
                      <TreeRow $m={6} $pad={5} $gap={9}><Ic n="gear" s={15} /><MonoText>1AT-PD-WX1[SC 25 WDZ-BYJ-5*4]</MonoText></TreeRow>
                      <TreeRow $m={6} $pad={5} $gap={9}><Ic n="gear" s={15} /><MonoText>1AT-PD-WX2[SC 32 WDZ-BYJ-5*6]</MonoText></TreeRow>
                    </Guide>
                  </TreeScroll>
                </TreeArea>
                <HBar thumb={155} />
              </SubPanel>
            </DefineBody>

            <PanelGap />
            <PanelHead title="属性编辑器" />
            <PropBody>
              <PropGrid>
                <HeadCell />
                <HeadCell>属性名称</HeadCell>
                <HeadCell $hot>属性值</HeadCell>
                <HeadCell>附加</HeadCell>
                {props.map((p) => (
                  <React.Fragment key={p.n}>
                    <NumCell $sel={p.sel}>{p.n}</NumCell>
                    <NameCell $sel={p.sel} $blue={p.blue} $grey={!!p.fold} $branch={p.branch} $last={p.last}>
                      {p.fold && (
                        <FoldBox>{p.fold === 'plus' ? <Plus size={12} color="#333" /> : <Minus size={12} color="#333" />}</FoldBox>
                      )}
                      <span>{p.name}</span>
                    </NameCell>
                    <ValueCell $sel={p.sel} $mono={p.mono}>{p.val}</ValueCell>
                    <AddCell>
                      {p.box !== 'none' && (
                        <CheckBox>{p.box === 'on' && <Check size={13} color="#666" strokeWidth={1.8} />}</CheckBox>
                      )}
                    </AddCell>
                  </React.Fragment>
                ))}
              </PropGrid>
              <PropScroll>
                <ChevronUp size={14} strokeWidth={3} color="#666" />
                <VThumb $top={6} $h={290} />
                <Grow />
                <ChevronDown size={14} strokeWidth={3} color="#666" />
              </PropScroll>
            </PropBody>
          </Panels>
        </LeftColumn>

        <RightColumn>
          <CadCanvas><CadDrawing /></CadCanvas>
          <SnapBar>
            <Grip />
            <SnapBtn>正交</SnapBtn>
            <SnapBtn $on>对象捕捉</SnapBtn>
            <SnapBtn>CAD图灰显</SnapBtn>
            <SnapBtn>动态输入</SnapBtn>
            <SnapDivider />
            <Grip />
            <SnapPoint><Ic n="cross" />交点</SnapPoint>
            <SnapPoint><Ic n="foot" />垂点</SnapPoint>
            <SnapPoint><Ic n="mid" />中点</SnapPoint>
          </SnapBar>
        </RightColumn>
      </Workspace>

      <StatusLine />
      <StatusBar>
        <StatusSeg $w={188} $wide>X=-72582 Y=90182</StatusSeg>
        <StatusSeg $w={100}>层高:3.5m</StatusSeg>
        <StatusSeg $w={125}>底标高:0m</StatusSeg>
        <StatusSeg $w={67}>0</StatusSeg>
        <StatusSeg $w={1430} />
      </StatusBar>

      <Dialog>
        <DialogTitle>
          <span>回路信息</span>
          <DialogBtns>
            <DialogMin />
            <DialogMax />
          </DialogBtns>
        </DialogTitle>
        <DialogPanes>
          <DialogPane $w={559}>
            <DataGrid $cols="26px 91px 91px 91px 93px 90px">
              <GridHead />
              <GridHead>配电箱信息</GridHead>
              <GridHead>回路编号</GridHead>
              <GridHead>构件名称</GridHead>
              <GridHead $hot>管径(mm)</GridHead>
              <GridHead>规格型号</GridHead>
              <GridNum $hot>1</GridNum>
              <GridCell>1AT-PD</GridCell>
              <GridCell>WLE1</GridCell>
              <GridCell>1AT-PD-WLE1</GridCell>
              <GridCell $active>20</GridCell>
              <GridCell $left>WDZ-BYJ-3*2.5</GridCell>
            </DataGrid>
            <MoveBtn>&lt;&lt;</MoveBtn>
          </DialogPane>
          <DialogPane $w={247}>
            <DataGrid $cols="26px 91px">
              <GridHead />
              <GridHead>导线根数</GridHead>
              <GridNum>1</GridNum>
              <GridCell $cjk>默认</GridCell>
              <GridNum>2</GridNum>
              <GridCell>3</GridCell>
              <GridNum>3</GridNum>
              <GridCell>4</GridCell>
            </DataGrid>
          </DialogPane>
        </DialogPanes>
        <DialogFoot>
          <FootBtn>删除</FootBtn>
          <FootBtn>配管规格</FootBtn>
          <FootSpacer />
          <FootBtn>确定</FootBtn>
          <FootBtn>取消</FootBtn>
        </DialogFoot>
        <HiddenCheck />
        <RedRing />
      </Dialog>

      <ImeBar>
        <ImeLogo><span>S</span></ImeLogo>
        <ImeChar>中</ImeChar>
        <ImePunct>°,</ImePunct>
        <Smile size={22} color="#1a78d0" strokeWidth={2} />
        <Mic size={22} color="#1a78d0" strokeWidth={2.6} />
        <Keyboard size={23} color="#1a78d0" strokeWidth={2} />
        <ImeUser>
          <svg width="22" height="22" viewBox="0 0 20 20"><circle cx="8" cy="5" r="3.4" fill="#b9c3cc" /><path d="M2 16q1-7 6-7t6 7z" fill="#b9c3cc" /><rect x="8" y="12" width="11" height="7" fill="#c8d0d8" /></svg>
        </ImeUser>
        <Shirt size={22} color="#1a78d0" fill="#1a78d0" />
        <Wrench size={21} color="#1a78d0" fill="#1a78d0" />
      </ImeBar>
    </Root>
  );
}

/* ---------- shell ---------- */
const Root = styled.div`
  position: relative;
  width: 1920px;
  height: 1030px;
  overflow: hidden;
  display: flex;
  flex-direction: column;
  background: #f0f0f0;
  font-family: ${SANS};
  filter: blur(0.4px);
`;

const TitleBar = styled.div`
  height: 36px;
  flex: none;
  display: flex;
  align-items: center;
  background: #fff;
  border-bottom: 1px solid #9db4d0;
  padding-left: 52px;
`;

const Qat = styled.div`
  width: 368px;
  height: 32px;
  margin-top: -3px;
  display: flex;
  align-items: center;
  gap: 9px;
  padding-left: 12px;
  border: 1px solid #c8c8c8;
  border-left: none;
  border-top: none;
  border-radius: 0 18px 18px 0;
  box-shadow: 0 1px 1px #ddd;
`;

const QatMore = styled.div`
  margin-left: 9px;
  display: flex;
`;

const WindowTitle = styled.div`
  margin-left: 188px;
  font-size: 15.4px;
  color: #3a3a3a;
  white-space: nowrap;
  margin-top: -6px;
`;

const WinButtons = styled.div`
  margin-left: auto;
  margin-right: 26px;
  display: flex;
  align-items: center;
  gap: 43px;
`;

const WinRestore = styled.div`
  width: 10px;
  height: 12px;
  border: 1px solid #888;
  box-shadow: 2px -2px 0 -1px #fff, 2px -2px 0 0 #888;
`;

const AppLogo = styled.div`
  position: absolute;
  left: 5px;
  top: 3px;
  width: 48px;
  height: 47px;
  border-radius: 50%;
  z-index: 3;
  background: radial-gradient(circle at 50% 40%, #4db2f2, #1279d0 70%);
  border: 3px solid #d4dde8;
  box-shadow: 0 1px 3px #6a7d95;
  color: #fff;
  font-size: 30px;
  font-weight: 700;
  display: flex;
  align-items: center;
  justify-content: center;
`;

const TabRow = styled.div`
  height: 32px;
  flex: none;
  display: flex;
  align-items: flex-end;
  gap: 7px;
  padding-left: 64px;
  background: #bdd9fc;
`;

const RibbonTab = styled.div`
  width: 57px;
  height: 29px;
  padding-bottom: 2px;
  display: flex;
  align-items: center;
  justify-content: center;
  font-size: 15px;
  color: #243f68;
  border-radius: 3px 3px 0 0;
  background: ${(p) => (p.$active ? 'linear-gradient(#f2f8ff, #dbe9fa)' : 'transparent')};
  box-shadow: ${(p) => (p.$active ? '0 0 0 1px #a8c6ea' : 'none')};
  z-index: 1;
`;

const Mascot = styled.div`
  margin-left: auto;
  margin-right: 121px;
  align-self: center;
`;

const RibbonBody = styled.div`
  height: 136px;
  flex: none;
  display: flex;
  gap: 4px;
  padding: 4px 0 7px 5px;
  background: linear-gradient(#dcebfb, #e8f3fe 60%, #d8e8f8);
  border-top: 1px solid #a8c6ea;
  border-bottom: 4px solid #a5c0de;
`;

const Group = styled.div`
  width: ${(p) => p.$w}px;
  flex: none;
  display: flex;
  flex-direction: column;
  border-radius: 3px;
  overflow: hidden;
  background: linear-gradient(#d9e5f3, #c9dbef 60%, #d3e2f3);
  box-shadow: 0 0 0 1px #c2d4e9;
`;

const GroupMain = styled.div`
  flex: 1;
  display: flex;
  padding-left: ${(p) => p.$pad || 0}px;
`;

const GroupLabel = styled.div`
  height: 24px;
  flex: none;
  padding-bottom: 2px;
  display: flex;
  align-items: center;
  justify-content: center;
  font-size: 14.5px;
  color: #5f80ab;
  background: #bfd2e9;
`;

const LargeBtn = styled.div`
  width: ${(p) => p.$w}px;
  flex: none;
  display: flex;
  flex-direction: column;
  align-items: center;
`;

const LargeSlot = styled.div`
  height: 56px;
  display: flex;
  align-items: center;
  justify-content: center;
`;

const LargeText = styled.div`
  height: 20px;
  line-height: 20px;
  font-size: 15px;
  color: #2b4a78;
  white-space: nowrap;
  margin-bottom: 7px;
`;

const ToolCol = styled.div`
  width: ${(p) => (p.$w ? `${p.$w}px` : 'auto')};
  flex: none;
  display: flex;
  flex-direction: column;
`;

const ToolRow = styled.div`
  height: 32.5px;
  display: flex;
  align-items: center;
  align-self: flex-start;
  gap: 6px;
  padding: 0 7px;
  font-size: 15px;
  white-space: nowrap;
  color: ${(p) => (p.$off ? '#a5acb6' : '#2b4a78')};
  opacity: ${(p) => (p.$off ? 0.85 : 1)};
  width: ${(p) => (p.$active ? '81px' : 'auto')};
  border-radius: 3px;
  background: ${(p) => (p.$active ? 'linear-gradient(#fde5b0, #f7bd63 60%, #fbd084)' : 'transparent')};
  box-shadow: ${(p) => (p.$active ? 'inset 0 0 0 1px #c59a55' : 'none')};
`;

const Dots = styled.span`
  color: #2b4a78;
  font-size: 13px;
  width: 14px;
`;

const Caret = styled.i`
  flex: none;
  width: 8px;
  height: 4px;
  margin-left: 4px;
  display: inline-block;
  background: #5f7896;
  clip-path: polygon(0 0, 100% 0, 50% 100%);
`;

const QatCaret = styled(Caret)`
  margin: 0 1px 0 0;
`;

const CollapsedGroup = styled.div`
  width: ${(p) => p.$w}px;
  flex: none;
  display: flex;
  flex-direction: column;
  align-items: center;
  padding-top: 5px;
  border-radius: 3px;
  background: linear-gradient(#d5e5f6, #ecf5fe);
  box-shadow: 0 0 0 1px #bcd2e8;
`;

const CollapsedBox = styled.div`
  width: 45px;
  height: 46px;
  margin-bottom: 8px;
  padding-top: 4px;
  display: flex;
  justify-content: center;
  border-radius: 5px;
  background: linear-gradient(#dbe7f4 65%, #c6d8ec);
  box-shadow: 0 0 0 1px #b4cae2;
`;

const Workspace = styled.div`
  flex: 1;
  min-height: 0;
  display: flex;
`;

const LeftColumn = styled.div`
  width: 480px;
  flex: none;
  display: flex;
  background: #f0f0f0;
`;

const SideTabs = styled.div`
  width: 25px;
  margin-right: 2px;
  padding-top: 7px;
  flex: none;
  display: flex;
  flex-direction: column;
  background: repeating-linear-gradient(45deg, #f2f2f2, #f2f2f2 2px, #e9e9e9 2px, #e9e9e9 3px);
  border-right: 1px solid #777;
`;

const SideTab = styled.div`
  height: ${(p) => p.$h}px;
  flex: none;
  padding-top: 9px;
  writing-mode: vertical-rl;
  font-size: 18px;
  letter-spacing: 2px;
  line-height: 24px;
  font-weight: ${(p) => (p.$active ? 700 : 400)};
  color: ${(p) => (p.$active ? '#111' : '#333')};
  background: ${(p) => (p.$active ? '#a6ccf2' : '#fff')};
  clip-path: polygon(0 6px, 100% 0, 100% 100%, 0 calc(100% - 6px));
`;

const Panels = styled.div`
  width: 449px;
  flex: none;
  display: flex;
  flex-direction: column;
  padding-top: 1px;
`;

const PanelHeader = styled.div`
  height: 18px;
  flex: none;
  display: flex;
  align-items: center;
  justify-content: space-between;
  padding: 0 8px 0 1px;
  font-size: 15px;
  color: #222;
  background: #efefef;
  border: 1px solid #aaa;
  border-bottom: none;
  border-radius: 2px 2px 0 0;
`;

const PanelPin = styled.div`
  display: flex;
  align-items: center;
  gap: 12px;
`;

const PinIcon = styled.svg`
  width: 12px;
  height: 14px;
`;

const DefineBody = styled.div`
  height: 335px;
  flex: none;
  display: flex;
  gap: 6px;
  padding: 3px 0 0 2px;
`;

const PanelGap = styled.div`
  height: 8px;
  flex: none;
`;

const SubPanel = styled.div`
  width: ${(p) => p.$w}px;
  flex: none;
  display: flex;
  flex-direction: column;
  border: 2px solid #7ba3d6;
  background: #fff;
`;

const Combo = styled.div`
  height: 26px;
  flex: none;
  display: flex;
  align-items: center;
  justify-content: space-between;
  padding: 0 6px 0 7px;
  font-size: 15px;
  color: #222;
  border-bottom: 1px solid #ccc;
`;

const MiniBar = styled.div`
  height: 27px;
  flex: none;
  display: flex;
  align-items: flex-end;
  gap: 1px;
  background: #cfe0f5;
  border-bottom: 1px solid #aaa;
`;

const MiniBtn = styled.div`
  width: ${(p) => p.$w}px;
  height: 21px;
  display: flex;
  align-items: center;
  justify-content: center;
  background: #efefef;
  border: 1px solid #bbb;
  border-bottom: none;
`;

const FoldPair = styled.span`
  display: block;
  width: 20px;
  height: 17px;
  background:
    linear-gradient(#2e8fdc, #2e8fdc) 0 5px / 10px 3px no-repeat,
    linear-gradient(#2e8fdc, #2e8fdc) 10px 11px / 10px 3px no-repeat
    ${(p) => (p.$plus ? ', linear-gradient(#2e8fdc, #2e8fdc) 3.5px 1px / 3px 11px no-repeat, linear-gradient(#2e8fdc, #2e8fdc) 13.5px 7px / 3px 10px no-repeat' : '')};
`;

const EditText = styled.span`
  font-size: 15px;
  white-space: nowrap;
  color: #55708f;
  text-shadow: 1px 1px 0 #e0b46a;
`;

const TreeArea = styled.div`
  flex: 1;
  min-height: 0;
  display: flex;
  overflow: hidden;
`;

const TreeScroll = styled.div`
  flex: 1;
  min-width: 0;
  overflow: hidden;
  padding-top: ${(p) => p.$top}px;
`;

const TreeRow = styled.div`
  height: 20px;
  display: flex;
  align-items: center;
  gap: ${(p) => p.$gap}px;
  margin-left: ${(p) => p.$m || 0}px;
  padding-left: ${(p) => p.$pad}px;
  white-space: nowrap;
  overflow: hidden;
  background: ${(p) => (p.$sel ? '#e2e2e2' : 'transparent')};
`;

const RowText = styled.span`
  font-size: 15px;
  color: #333;
  margin-left: ${(p) => p.$gapL || 0}px;
  margin-bottom: 3px;
`;

const TreeCode = styled.span`
  letter-spacing: 3px;
`;

const MonoText = styled.span`
  font-family: ${MONO};
  font-size: 12.5px;
  color: #111;
  -webkit-text-stroke: 0.25px #111;
`;

const Guide = styled.div`
  margin-left: ${(p) => p.$m}px;
  border-left: 1px dotted #999;
`;

const VScroll = styled.div`
  width: 23px;
  flex: none;
  display: flex;
  flex-direction: column;
  align-items: center;
  justify-content: space-between;
  padding: 6px 0;
  background: #f0f0f0;
`;

const VThumb = styled.div`
  align-self: stretch;
  margin: ${(p) => p.$top}px 2px 0;
  height: ${(p) => p.$h}px;
  background: #c2c2c2;
`;

const HScroll = styled.div`
  height: 23px;
  flex: none;
  display: flex;
  align-items: center;
  padding: 0 8px 0 8px;
  background: #f0f0f0;
`;

const HThumb = styled.div`
  width: ${(p) => p.$w}px;
  height: 100%;
  margin-left: 6px;
  margin-right: auto;
  background: #cfcfcf;
`;

const BlueCap = styled.div`
  height: 8px;
  flex: none;
  background: #cfe0f5;
`;

const RightTools = styled.div`
  height: 32px;
  flex: none;
  display: flex;
  align-items: center;
  gap: 4px;
  padding-left: 3px;
  background: #f5f9fd;
  border-bottom: 2px solid #c4d0de;
`;

const NewText = styled.span`
  font-size: 15px;
  color: #333;
  margin-left: 3px;
  white-space: nowrap;
`;

const DarkCaret = styled(Caret)`
  background: #222;
  margin-left: 2px;
`;

const ToolSpacer = styled.span`
  width: ${(p) => p.$w}px;
  flex: none;
`;

const MoreMark = styled.span`
  margin-left: auto;
  margin-right: 5px;
  font-size: 18px;
  font-weight: 700;
  color: #222;
`;

/* ---------- property grid ---------- */
const PropBody = styled.div`
  flex: 1;
  min-height: 0;
  display: flex;
  gap: 2px;
  padding: 4px 2px 0 3px;
  background: #fff;
  border: 1px solid #bbb;
  border-top: none;
`;

const PropGrid = styled.div`
  display: grid;
  grid-template-columns: 26px 113px 244px 38px;
  grid-template-rows: 31px;
  grid-auto-rows: 23.75px;
  align-content: start;
`;

const HeadCell = styled.div`
  display: flex;
  align-items: center;
  justify-content: center;
  padding-bottom: 3px;
  font-size: 15px;
  color: ${(p) => (p.$hot ? '#7f1f7f' : '#333')};
  background: ${(p) => (p.$hot ? 'linear-gradient(#fbe0a8, #eeb764)' : 'linear-gradient(#fff, #eee)')};
  border-right: 1px solid #ddd;
`;

const NumCell = styled.div`
  display: flex;
  align-items: center;
  justify-content: center;
  font-size: 14px;
  color: ${(p) => (p.$sel ? '#7f1f7f' : '#333')};
  background: ${(p) => (p.$sel ? '#f9cf90' : '#f0f0f0')};
  border-bottom: 2px solid #d0d0d0;
`;

const NameCell = styled.div`
  position: relative;
  display: flex;
  align-items: center;
  padding-left: ${(p) => (p.$branch ? 37 : 25)}px;
  font-size: 15px;
  white-space: nowrap;
  overflow: hidden;
  color: ${(p) => (p.$sel ? '#e8f4ff' : p.$blue ? '#2030f0' : p.$grey ? '#8a8a8a' : '#333')};
  background: ${(p) => (p.$sel ? '#0078d7' : '#fff')};
  border-bottom: 2px solid #d8d8d8;
  border-right: 1px solid #d8d8d8;
  ${(p) => p.$branch && `
    &::before {
      content: '';
      position: absolute;
      left: 10px;
      top: 0;
      height: ${p.$last ? '50%' : '100%'};
      border-left: 1px solid #bbb;
    }
    &::after {
      content: '';
      position: absolute;
      left: 10px;
      top: 50%;
      width: 21px;
      border-top: 1px solid #bbb;
    }
  `}
`;

const FoldBox = styled.span`
  position: absolute;
  left: 3px;
  top: 4px;
  width: 15px;
  height: 15px;
  display: flex;
  align-items: center;
  justify-content: center;
  border: 1px solid #bbb;
`;

const ValueCell = styled.div`
  display: flex;
  align-items: center;
  padding-left: 3px;
  white-space: pre;
  font-family: ${(p) => (p.$mono ? MONO : SANS)};
  font-size: ${(p) => (p.$mono ? 12.5 : 15)}px;
  -webkit-text-stroke: ${(p) => (p.$mono ? '0.25px #111' : '0')};
  color: #111;
  background: ${(p) => (p.$sel ? '#d6e8f8' : '#fff')};
  border-bottom: 2px solid #d8d8d8;
  border-right: 1px solid #d8d8d8;
`;

const AddCell = styled.div`
  display: flex;
  align-items: center;
  justify-content: center;
  border-bottom: 2px solid #d8d8d8;
  border-right: 1px solid #d8d8d8;
`;

const CheckBox = styled.span`
  width: 16px;
  height: 16px;
  display: flex;
  align-items: center;
  justify-content: center;
  border: 1px solid #666;
  background: #fff;
`;

const PropScroll = styled.div`
  width: 20px;
  flex: none;
  display: flex;
  flex-direction: column;
  align-items: center;
  padding: 7px 0 8px;
  background: #f0f0f0;
`;

const Grow = styled.div`
  flex: 1;
`;

/* ---------- canvas ---------- */
const RightColumn = styled.div`
  flex: 1;
  min-width: 0;
  display: flex;
  flex-direction: column;
`;

const CadCanvas = styled.div`
  height: 762px;
  flex: none;
  background: #000;
  overflow: hidden;
`;

const CadSvg = styled.svg`
  display: block;
  width: 1440px;
  height: 762px;
`;

const SnapBar = styled.div`
  flex: 1;
  display: flex;
  align-items: center;
  gap: 2px;
  padding: 0 0 3px 3px;
  background: #fff;
  font-size: 15px;
  color: #333;
`;

const Grip = styled.span`
  width: 2px;
  height: 27px;
  margin-right: 6px;
  border-left: 2px dotted #bbb;
`;

const SnapBtn = styled.span`
  height: 27px;
  display: flex;
  align-items: center;
  padding: 0 5px;
  white-space: nowrap;
  background: ${(p) => (p.$on ? '#cfe6fb' : 'transparent')};
  box-shadow: ${(p) => (p.$on ? 'inset 0 0 0 1px #8fc4f0' : 'none')};
`;

const SnapDivider = styled.span`
  width: 1px;
  height: 32px;
  margin: 0 2px 0 10px;
  background: #ddd;
`;

const SnapPoint = styled.span`
  display: flex;
  align-items: center;
  gap: 7px;
  margin-right: 7px;
  white-space: nowrap;
`;

const StatusLine = styled.div`
  height: 4px;
  flex: none;
  background: #b9d2ef;
`;

const StatusBar = styled.div`
  height: 23px;
  flex: none;
  display: flex;
  gap: 5px;
  background: #f0f0f0;
  font-size: 14px;
  color: #333;
`;

const StatusSeg = styled.div`
  width: ${(p) => p.$w}px;
  flex: none;
  display: flex;
  align-items: center;
  padding-left: 3px;
  white-space: nowrap;
  letter-spacing: ${(p) => (p.$wide ? '0.7px' : 0)};
  border-top: 1px solid #bbb;
  border-left: 1px solid #bbb;
`;

/* ---------- dialog ---------- */
const Dialog = styled.div`
  position: absolute;
  left: 972px;
  top: 574px;
  bottom: 0;
  width: 817px;
  z-index: 4;
  display: flex;
  flex-direction: column;
  background: #dbe9fb;
  border: 1px solid #6d92c6;
  border-bottom: none;
`;

const DialogTitle = styled.div`
  height: 35px;
  flex: none;
  display: flex;
  align-items: center;
  justify-content: space-between;
  padding: 0 12px 5px 11px;
  font-size: 15.5px;
  color: #77879c;
  background: linear-gradient(#e5effc 30%, #c9dcf5);
`;

const DialogBtns = styled.div`
  display: flex;
  align-items: center;
  gap: 24px;
`;

const DialogMin = styled.span`
  width: 8px;
  height: 3px;
  background: #666;
`;

const DialogMax = styled.span`
  width: 11px;
  height: 12px;
  border: 1px solid #666;
  border-top-width: 3px;
`;

const DialogPanes = styled.div`
  height: 369px;
  flex: none;
  display: flex;
  gap: 3px;
  padding: 0 3px;
  background: #7ba0cf;
  border-top: 2px solid #7ba0cf;
  border-bottom: 2px solid #7ba0cf;
`;

const DialogPane = styled.div`
  position: relative;
  width: ${(p) => p.$w}px;
  flex: none;
  padding: 1px 0 0 2px;
  background: #fff;
`;

const DataGrid = styled.div`
  display: inline-grid;
  grid-template-columns: ${(p) => p.$cols};
  grid-auto-rows: 24px;
`;

const GridHead = styled.div`
  display: flex;
  align-items: center;
  justify-content: center;
  padding-bottom: 3px;
  font-size: 15.5px;
  white-space: nowrap;
  color: ${(p) => (p.$hot ? '#6a1fc0' : '#0f20e8')};
  background: ${(p) => (p.$hot ? 'linear-gradient(#fbe0a8, #eeb764)' : 'linear-gradient(#fff, #eee)')};
  border-right: 1px solid #ddd;
`;

const GridNum = styled.div`
  display: flex;
  align-items: center;
  justify-content: center;
  font-size: 13px;
  font-family: ${MONO};
  color: ${(p) => (p.$hot ? '#7f1f7f' : '#333')};
  background: ${(p) => (p.$hot ? '#f9cf90' : '#f0f0f0')};
  border-bottom: 2px solid #d0d0d0;
`;

const GridCell = styled.div`
  position: relative;
  display: flex;
  align-items: center;
  justify-content: ${(p) => (p.$left ? 'flex-start' : 'center')};
  padding-left: ${(p) => (p.$left ? 2 : 0)}px;
  overflow: ${(p) => (p.$active ? 'visible' : 'hidden')};
  white-space: nowrap;
  font-family: ${(p) => (p.$cjk ? SANS : MONO)};
  font-size: ${(p) => (p.$cjk ? 15 : 12.5)}px;
  -webkit-text-stroke: ${(p) => (p.$cjk ? '0' : '0.25px #111')};
  color: #111;
  background: ${(p) => (p.$active ? '#d9e8dd' : '#fff')};
  border: ${(p) => (p.$active ? '3px solid #000' : 'none')};
  border-right: ${(p) => (p.$active ? '3px solid #000' : '1px solid #d8d8d8')};
  border-bottom: ${(p) => (p.$active ? '3px solid #000' : '2px solid #d8d8d8')};
  ${(p) => p.$active && `
    &::after {
      content: '';
      position: absolute;
      right: -5px;
      bottom: -5px;
      width: 5px;
      height: 5px;
      background: #000;
    }
  `}
`;

const MoveBtn = styled.div`
  position: absolute;
  right: 0;
  top: 227px;
  width: 41px;
  height: 30px;
  display: flex;
  align-items: center;
  justify-content: center;
  font-size: 15px;
  color: #445;
  background: #dce9f8;
  border: 1px solid #7a9ccc;
  border-right: none;
  border-radius: 2px 0 0 2px;
`;

const DialogFoot = styled.div`
  height: 36px;
  flex: none;
  display: flex;
  gap: 8px;
  padding: 8px 73px 0 12px;
`;

const FootSpacer = styled.div`
  flex: 1;
`;

const FootBtn = styled.div`
  width: 93px;
  height: 30px;
  display: flex;
  align-items: center;
  justify-content: center;
  font-size: 15px;
  color: #333;
  background: linear-gradient(#eaf3fd, #d3e3f6);
  border: 1px solid #98afcf;
  border-radius: 3px;
`;

const HiddenCheck = styled.span`
  position: absolute;
  left: 11px;
  bottom: -7px;
  width: 10px;
  height: 10px;
  background: #444;
`;

const RedRing = styled.div`
  position: absolute;
  left: 549px;
  top: 53px;
  width: 155px;
  height: 125px;
  border: 6px solid #f03c3c;
  border-radius: 50%;
`;

/* ---------- ime ---------- */
const ImeBar = styled.div`
  position: absolute;
  left: 1623px;
  top: 1000px;
  width: 259px;
  height: 30px;
  z-index: 5;
  display: flex;
  align-items: center;
  gap: 8px;
  padding-left: 3px;
  background: #f6faff;
  border: 1px solid #cdd9e6;
`;

const ImeLogo = styled.div`
  width: 33px;
  height: 29px;
  display: flex;
  align-items: center;
  justify-content: center;
  border-radius: 4px;
  transform: rotate(-8deg);
  background: linear-gradient(#f5641e, #e8441a);
  color: #fff;
  font-size: 28px;
  font-weight: 700;
`;

const ImeChar = styled.span`
  font-size: 21px;
  font-weight: 700;
  color: #1a78d0;
`;

const ImePunct = styled.span`
  width: 20px;
  font-size: 19px;
  font-weight: 700;
  color: #1a78d0;
`;

const ImeUser = styled.span`
  display: flex;
`;
